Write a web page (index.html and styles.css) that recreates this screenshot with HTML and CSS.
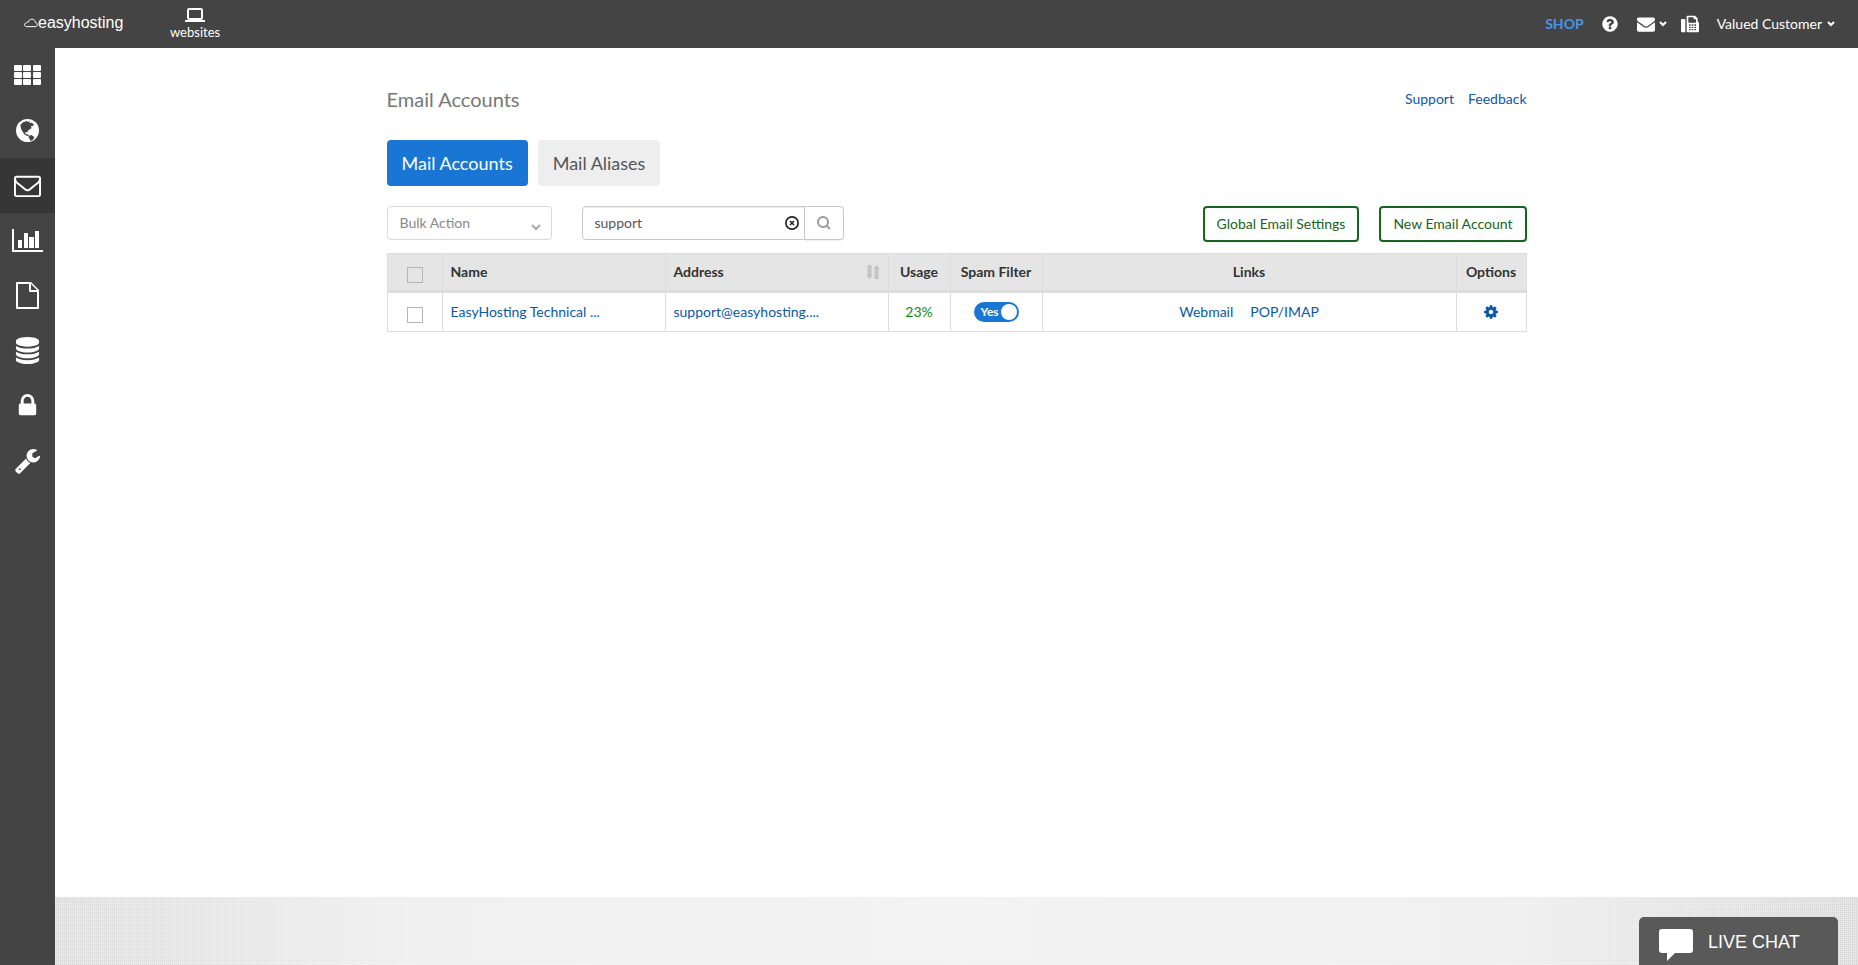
FILE: index.html
```html
<!DOCTYPE html>
<html lang="en">
<head>
<meta charset="utf-8">
<meta name="viewport" content="width=device-width, initial-scale=1">
<title>Email Accounts</title>
<link rel="stylesheet" href="styles.css">
</head>
<body>
<header class="topbar">
  <a class="logo" href="#">
    <svg class="logo-cloud" viewBox="0 0 42 30" aria-hidden="true"><path d="M8 26C3 26 1.500 23 1.500 20.500C1.500 17 4 14.500 7.500 14.500C8.500 13 10.500 12 12.500 12.500C14 7 18 3.500 24 3.500C30 3.500 34 8 34 13.500C38 14.500 40.500 17 40 20.500C39.500 24 37 26 33 26Z"/></svg>
    <span>easyhosting</span>
  </a>
  <a class="websites" href="#">
    <svg class="laptop" viewBox="0 0 20 14" aria-hidden="true"><rect x="3" y="1" width="14" height="10" rx="1"/><path d="M0 13H20"/></svg>
    <span>websites</span>
  </a>
  <nav class="account" aria-label="Account">
    <a class="shop" href="#">SHOP</a>
    <a class="icon-link" href="#" aria-label="Help"><svg class="i18" viewBox="0 0 1792 1792"><path d="M1024 1376v-192q0-14-9-23t-23-9h-192q-14 0-23 9t-9 23v192q0 14 9 23t23 9h192q14 0 23-9t9-23zm256-672q0-88-55.500-163t-138.500-116-170-41q-243 0-371 213-15 24 8 42l132 100q7 6 19 6 16 0 25-12 53-68 86-92 34-24 86-24 48 0 85.500 26t37.500 59q0 38-20 61t-68 45q-63 28-115.500 86.500t-52.500 125.500v36q0 14 9 23t23 9h192q14 0 23-9t9-23q0-19 21.500-49.500t54.500-49.500q32-18 49-28.500t46-35 44.500-48 28-60.500 12.500-81zm384 192q0 209-103 385.500t-279.500 279.500-385.500 103-385.500-103-279.500-279.500-103-385.500 103-385.500 279.500-279.500 385.500-103 385.500 103 279.500 279.500 103 385.500z"/></svg></a>
    <button class="menu-button" type="button" aria-label="Messages">
      <svg class="i18" viewBox="0 0 1792 1792"><path d="M1792 710v794q0 66-47 113t-113 47h-1472q-66 0-113-47t-47-113v-794q44 49 101 87 362 246 497 345 57 42 92.500 65.500t94.500 48 110 24.500h2q51 0 110-24.500t94.500-48 92.500-65.500q170-123 498-345 57-39 100-87zm0-294q0 79-49 151t-122 123q-376 261-468 325-10 7-42.500 31t-54 38.500-52 32.500-57.500 27-50 9h-2q-23 0-50-9t-57.500-27-52-32.500-54-38.500-42.500-31q-91-64-262-182.500t-205-142.500q-62-42-117-115.500t-55-136.500q0-78 41.500-130t118.500-52h1472q65 0 112.500 47t47.500 113z"/></svg>
      <svg class="caret" viewBox="0 0 8 6"><path d="M1 1L4 4L7 1"/></svg>
    </button>
    <a class="icon-link" href="#" aria-label="Fax"><svg class="i18" viewBox="0 0 54 54"><path d="M2 12h9q2 0 2 2v36q0 2-2 2H4q-3 0-4-3V14q0-2 2-2zM17 4q0-2 2-2h23l8 8v10q4 1 4 5v22q0 5-5 5H20q-3 0-3-3zM22 7v16h23V13h-7V7zM24 28v4h5v-4zm8 0v4h5v-4zm8 0v4h5v-4zm-16 7v4h5v-4zm8 0v4h5v-4zm8 0v4h5v-4zm-16 7v4h5v-4zm8 0v4h5v-4zm8 0v4h5v-4z" fill-rule="evenodd"/></svg></a>
    <button class="menu-button customer" type="button"><span>Valued Customer</span>
      <svg class="caret" viewBox="0 0 8 6"><path d="M1 1L4 4L7 1"/></svg>
    </button>
  </nav>
</header>

<div class="shell">
  <nav class="sidebar" aria-label="Main">
    <a href="#" aria-label="Dashboard"><svg viewBox="0 0 27 27"><path d="M1 3h6q1 0 1 1v4q0 1-1 1H1q-1 0-1-1V4q0-1 1-1zm9 0h6q1 0 1 1v4q0 1-1 1h-6q-1 0-1-1V4q0-1 1-1zm10 0h6q1 0 1 1v4q0 1-1 1h-6q-1 0-1-1V4q0-1 1-1zM1 10h6q1 0 1 1v4q0 1-1 1H1q-1 0-1-1v-4q0-1 1-1zm9 0h6q1 0 1 1v4q0 1-1 1h-6q-1 0-1-1v-4q0-1 1-1zm10 0h6q1 0 1 1v4q0 1-1 1h-6q-1 0-1-1v-4q0-1 1-1zM1 17h6q1 0 1 1v4q0 1-1 1H1q-1 0-1-1v-4q0-1 1-1zm9 0h6q1 0 1 1v4q0 1-1 1h-6q-1 0-1-1v-4q0-1 1-1zm10 0h6q1 0 1 1v4q0 1-1 1h-6q-1 0-1-1v-4q0-1 1-1z"/></svg></a>
    <a href="#" aria-label="Domains"><svg viewBox="0 0 81 81"><circle cx="40.500" cy="40.500" r="34.500"/><path class="land" d="M19 24L27 16L39 12L42 15L49 13L46 18L54 17L60 23L55 28L50 27L53 33L48 37L43 40L40 46L36 45L33 48L36 52L42 52L45 56L40 57L32 53L26 44L21 35ZM45 56L52 54L61 60L57 68L49 72L47 65L43 61ZM46 20L49 23L47 26L43 23Z"/></svg></a>
    <a class="active" href="#" aria-label="Email"><svg viewBox="0 0 1792 1792"><path d="M1664 1504v-768q-32 36-69 66-268 206-426 338-51 43-83 67t-86.500 48.500-102.500 24.500h-2q-48 0-102.500-24.500t-86.500-48.500-83-67q-158-132-426-338-37-30-69-66v768q0 13 9.500 22.500t22.500 9.500h1472q13 0 22.500-9.500t9.500-22.500zm0-1051v-24.500l-.5-13-3-12.500-5.500-9-9-7.500-14-2.500h-1472q-13 0-22.500 9.500t-9.500 22.500q0 168 147 284 193 152 401 317 6 5 35 29.500t46 37.500 44.500 31.500 50.500 27.500 43 9h2q20 0 43-9t50.500-27.500 44.500-31.500 46-37.500 35-29.500q208-165 401-317 54-43 100.500-115.500t46.500-131.500zm128-37v1088q0 66-47 113t-113 47h-1472q-66 0-113-47t-47-113v-1088q0-66 47-113t113-47h1472q66 0 113 47t47 113z"/></svg></a>
    <a href="#" aria-label="Statistics"><svg class="wide" viewBox="0 0 31 27"><path d="M0 2h2v21h29v2H0zM6 13h4v8H6zM12 6h4v15h-4zM17 10h5v11h-5zM23 4h4v17h-4z"/></svg></a>
    <a href="#" aria-label="Files"><svg viewBox="0 0 27 27"><path d="M3 0h14l8 8v19H3q-1 0-1-1V1q0-1 1-1zm1 2v23h19V10h-7q-1 0-1-1V2zm13 0v6h6z" fill-rule="evenodd"/></svg></a>
    <a href="#" aria-label="Databases"><svg viewBox="0 0 1792 1792"><path d="M896 768q237 0 443-43t325-127v170q0 69-103 128t-280 93.500-385 34.500-385-34.500-280-93.500-103-128v-170q119 84 325 127t443 43zm0 768q237 0 443-43t325-127v170q0 69-103 128t-280 93.500-385 34.500-385-34.500-280-93.500-103-128v-170q119 84 325 127t443 43zm0-384q237 0 443-43t325-127v170q0 69-103 128t-280 93.500-385 34.500-385-34.500-280-93.500-103-128v-170q119 84 325 127t443 43zm0-1152q208 0 385 34.500t280 93.500 103 128v128q0 69-103 128t-280 93.500-385 34.500-385-34.500-280-93.500-103-128v-128q0-69 103-128t280-93.500 385-34.500z"/></svg></a>
    <a href="#" aria-label="Security"><svg viewBox="0 0 1792 1792"><path d="M640 768h512v-192q0-106-75-181t-181-75-181 75-75 181v192zm832 96v576q0 40-28 68t-68 28h-960q-40 0-68-28t-28-68v-576q0-40 28-68t68-28h32v-192q0-184 132-316t316-132 316 132 132 316v192h32q40 0 68 28t28 68z"/></svg></a>
    <a href="#" aria-label="Tools"><svg viewBox="0 0 1792 1792"><path d="M448 1472q0-26-19-45t-45-19-45 19-19 45 19 45 45 19 45-19 19-45zm644-420l-682 682q-37 37-90 37-52 0-91-37l-106-108q-38-36-38-90 0-53 38-91l681-681q39 98 114.500 173.500t173.500 114.500zm634-435q0 39-23 106-47 134-164.500 217.500t-258.500 83.500q-185 0-316.500-131.500t-131.500-316.500 131.500-316.500 316.500-131.500q58 0 121.500 16.500t107.500 46.500q16 11 16 28t-16 28l-293 169v224l193 107q5-3 79-48.500t135.500-81 70.500-35.500q15 0 23.500 10t8.500 25z"/></svg></a>
  </nav>

  <div class="page">
    <main class="content">
      <div class="heading">
        <h1>Email Accounts</h1>
        <nav class="help-links" aria-label="Help"><a href="#">Support</a><a href="#">Feedback</a></nav>
      </div>
      <div class="tabs">
        <button class="tab selected" type="button">Mail Accounts</button>
        <button class="tab" type="button">Mail Aliases</button>
      </div>
      <div class="toolbar">
        <div class="bulk">
          <select aria-label="Bulk Action"><option>Bulk Action</option></select>
          <svg class="bulk-caret" viewBox="0 0 10 7" aria-hidden="true"><path d="M1 1L5 5L9 1"/></svg>
        </div>
        <form class="search">
          <div class="search-field">
            <input type="text" value="support" aria-label="Search">
            <button class="clear" type="button" aria-label="Clear search"><svg viewBox="0 0 42 42"><circle cx="21" cy="21" r="18.500"/><path d="M15 15L27 27M27 15L15 27"/></svg></button>
          </div>
          <button class="search-button" type="button" aria-label="Search"><svg viewBox="0 0 42 42"><circle cx="18" cy="18" r="15"/><path d="M28 28L39 39"/></svg></button>
        </form>
        <div class="actions">
          <button class="outline" type="button">Global Email Settings</button>
          <button class="outline" type="button">New Email Account</button>
        </div>
      </div>
      <table class="accounts">
        <colgroup><col class="c-check"><col class="c-text"><col class="c-text"><col class="c-usage"><col class="c-spam"><col><col class="c-options"></colgroup>
        <thead>
          <tr>
            <th class="check"><input type="checkbox" aria-label="Select all"></th>
            <th>Name</th>
            <th><div class="sortable"><span>Address</span><svg class="sort" viewBox="0 0 14 14" aria-hidden="true"><path d="M1.500 0h4v10H7l-3.500 4L0 10h1.500zM8.500 14h4V4H14L10.500 0 7 4h1.500z"/></svg></div></th>
            <th class="center">Usage</th>
            <th class="center">Spam Filter</th>
            <th class="center">Links</th>
            <th class="center">Options</th>
          </tr>
        </thead>
        <tbody>
          <tr>
            <td class="check"><input type="checkbox" aria-label="Select EasyHosting Technical"></td>
            <td><a href="#">EasyHosting Technical ...</a></td>
            <td><a href="#">support@easyhosting....</a></td>
            <td class="center usage">23%</td>
            <td class="center"><label class="toggle"><input type="checkbox" checked aria-label="Spam filter"><span class="toggle-text">Yes</span><span class="knob"></span></label></td>
            <td class="center"><div class="row-links"><a href="#">Webmail</a><a href="#">POP/IMAP</a></div></td>
            <td class="center"><button class="gear" type="button" aria-label="Options"><svg viewBox="0 0 1792 1792"><path d="M1152 896q0-106-75-181t-181-75-181 75-75 181 75 181 181 75 181-75 75-181zm512-109v222q0 12-8 23t-20 13l-185 28q-19 54-39 91 35 50 107 138 10 12 10 25t-9 23q-27 37-99 108t-94 71q-12 0-26-9l-138-108q-44 23-91 38-16 136-29 186-7 28-36 28h-222q-14 0-24.500-8.500t-11.500-21.500l-28-184q-49-16-90-37l-141 107q-10 9-25 9-14 0-25-11-126-114-165-168-7-10-7-23 0-12 8-23 15-21 51-66.500t54-70.500q-27-50-41-99l-183-27q-13-2-21-12.500t-8-23.500v-222q0-12 8-23t19-13l186-28q14-46 39-92-40-57-107-138-10-12-10-24 0-10 9-23 26-36 98.500-107.500t94.500-71.500q13 0 26 10l138 107q44-23 91-38 16-136 29-186 7-28 36-28h222q14 0 24.500 8.500t11.500 21.500l28 184q49 16 90 37l142-107q9-9 24-9 13 0 25 10 129 119 165 170 7 8 7 22 0 12-8 23-15 21-51 66.500t-54 70.500q26 50 41 98l183 28q13 2 21 12.500t8 23.500z"/></svg></button></td>
          </tr>
        </tbody>
      </table>
    </main>
    <footer class="footer"></footer>
  </div>
</div>
<button class="live-chat" type="button">
  <svg viewBox="0 0 34 32" aria-hidden="true"><path d="M3 0h28q3 0 3 3v18q0 3-3 3H16l-8 8v-8H3q-3 0-3-3V3q0-3 3-3z"/></svg>
  <span>LIVE CHAT</span>
</button>
</body>
</html>
```
FILE: styles.css
```css
* { box-sizing: border-box; }

body {
  margin: 0;
  min-height: 100vh;
  display: flex;
  flex-direction: column;
  font-family: Lato, "Liberation Sans", sans-serif;
  font-size: 14px;
  line-height: 20px;
  color: #333;
  background: #fff;
}

a { color: #0b58a8; text-decoration: none; }
button, input, select { font: inherit; margin: 0; }
button { padding: 0; border: 0; background: none; cursor: pointer; }
svg { display: block; }

/* Top bar */
.topbar {
  display: flex;
  align-items: center;
  height: 48px;
  padding: 0 23px 0 24px;
  color: #fff;
  background: #444;
}
.topbar a, .topbar button { color: #fff; }
.topbar svg { fill: currentColor; }
.logo {
  display: flex;
  align-items: center;
  font-family: "Liberation Sans", Arial, sans-serif;
  font-size: 16px;
  width: 146px;
  padding-bottom: 2px;
}
.topbar .logo-cloud {
  width: 14px;
  height: 10px;
  fill: none;
  stroke: #fff;
  stroke-width: 3;
}
.websites { display: flex; flex-direction: column; align-items: center; font-size: 13px; }
.topbar .laptop {
  width: 20px;
  height: 14px;
  margin-top: 2px;
  fill: none;
  stroke: #fff;
  stroke-width: 2;
}
.account { display: flex; align-items: center; margin-left: auto; }
.topbar .shop { color: #4696ec; font-weight: 700; margin-right: 17px; }
.icon-link { margin-right: 18px; }
.i18 { width: 18px; height: 18px; }
.menu-button { display: flex; align-items: center; gap: 4px; margin-right: 14px; }
.customer { gap: 5px; margin-right: 0; }
.topbar .caret { width: 8px; height: 6px; fill: none; stroke: #fff; stroke-width: 2; }

/* Sidebar and page */
.shell { flex: 1; display: flex; }
.sidebar { flex: 0 0 55px; background: #444; }
.sidebar a {
  display: flex;
  align-items: center;
  justify-content: center;
  height: 55px;
}
.sidebar .active { background: #363636; }
.sidebar svg { width: 27px; height: 27px; fill: #fff; }
.sidebar .wide { width: 31px; }
.sidebar .land { fill: #444; }
.page { flex: 1; min-width: 0; display: flex; flex-direction: column; }
.content {
  flex: 1;
  width: 100%;
  max-width: 1180px;
  margin: 0 auto;
  padding: 39px 20px 0;
}
.footer {
  height: 68px;
  background:
    linear-gradient(90deg, rgba(255,255,255,.3) 1px, transparent 1px) 0 0 / 2px 2px,
    linear-gradient(rgba(255,255,255,.3) 1px, transparent 1px) 0 0 / 2px 2px,
    linear-gradient(90deg, #d8d8d8, #ebebeb 20%, #eee 50%, #ebebeb 80%, #d4d4d4);
}

/* Heading and tabs */
.heading { display: flex; justify-content: space-between; align-items: center; margin-bottom: 29px; }
h1 { margin: 0; font-size: 20px; line-height: 24px; font-weight: 400; color: #777; }
.help-links { display: flex; gap: 14px; }
.tabs { display: flex; gap: 10px; margin-bottom: 20px; }
.tab {
  height: 46px;
  padding: 0 15px;
  border-radius: 4px;
  font-size: 18px;
  color: #555;
  background: #eee;
}
.tab.selected { color: #fff; background: #1976d5; }

/* Toolbar */
.toolbar { display: flex; gap: 30px; align-items: flex-start; margin-bottom: 11px; }
.bulk { position: relative; width: 165px; }
.bulk select {
  appearance: none;
  width: 100%;
  height: 34px;
  padding: 0 12px;
  border: 1px solid #d9d9d9;
  border-radius: 4px;
  color: #888;
  background: #fff;
}
.bulk-caret {
  position: absolute;
  right: 11px;
  top: 18px;
  width: 10px;
  height: 7px;
  fill: none;
  stroke: #aaa;
  stroke-width: 2;
  pointer-events: none;
}
.search { display: flex; width: 262px; height: 34px; }
.search-field {
  flex: 1;
  display: flex;
  align-items: center;
  border: 1px solid #c8c8c8;
  border-radius: 4px 0 0 4px;
  padding: 0 5px 0 12px;
  box-shadow: inset 0 1px 1px rgba(0,0,0,.07);
}
.search-field input {
  flex: 1;
  min-width: 0;
  padding: 0;
  border: 0;
  outline: 0;
  color: #555;
  background: transparent;
}
.clear svg, .search-button svg { width: 14px; height: 14px; fill: none; stroke: #222; stroke-width: 5; }
.search-button {
  display: flex;
  align-items: center;
  justify-content: center;
  width: 39px;
  border: 1px solid #c8c8c8;
  border-left: 0;
  border-radius: 0 4px 4px 0;
  box-shadow: 0 1px 1px rgba(0,0,0,.07);
}
.search-button svg { stroke: #999; stroke-width: 6; }
.actions { display: flex; gap: 20px; margin-left: auto; }
.outline {
  height: 36px;
  padding: 0 12px;
  border: 2px solid #176321;
  border-radius: 4px;
  color: #176321;
}

/* Accounts table */
.accounts { width: 100%; table-layout: fixed; border-collapse: collapse; }
.c-check { width: 55px; }
.c-text { width: 223px; }
.c-usage { width: 62px; }
.c-spam { width: 92px; }
.c-options { width: 70px; }
.accounts th, .accounts td {
  height: 38px;
  padding: 0 8px;
  border: 1px solid #ddd;
  text-align: left;
  white-space: nowrap;
}
.accounts td { height: 40px; }
.accounts th { background: #e5e5e5; border-bottom: 3px solid #ddd; font-weight: 700; }
.accounts .center { text-align: center; }
.accounts .check { padding: 5px 0 0; text-align: center; }
.check input {
  appearance: none;
  display: block;
  width: 16px;
  height: 16px;
  margin: 0 auto;
  border: 1px solid #b5b5b5;
}
.sortable { display: flex; align-items: center; justify-content: space-between; }
.sort { width: 14px; height: 14px; fill: #c4c4c4; }
.usage { color: #108a10; }
.row-links { display: flex; justify-content: center; gap: 17px; }
.toggle {
  display: flex;
  align-items: center;
  justify-content: space-between;
  width: 45px;
  height: 20px;
  margin: 0 auto;
  padding: 0 2px 0 7px;
  border-radius: 10px;
  font-size: 12px;
  font-weight: 700;
  color: #fff;
  background: #1976d5;
}
.toggle input { position: absolute; opacity: 0; width: 1px; height: 1px; }
.knob { width: 16px; height: 16px; border-radius: 50%; background: #fff; }
.gear { display: block; margin: 0 auto; }
.gear svg { width: 16px; height: 16px; fill: #0b58a8; }

/* Chat launcher */
.live-chat {
  position: fixed;
  right: 20px;
  bottom: 0;
  display: flex;
  align-items: flex-start;
  gap: 15px;
  width: 199px;
  height: 48px;
  padding: 12px 20px 0;
  border-radius: 5px 5px 0 0;
  font-family: "Liberation Sans", Arial, sans-serif;
  font-size: 18px;
  line-height: 26px;
  color: #fff;
  background: #595959;
}
.live-chat svg { width: 34px; height: 32px; fill: #fff; }
```
